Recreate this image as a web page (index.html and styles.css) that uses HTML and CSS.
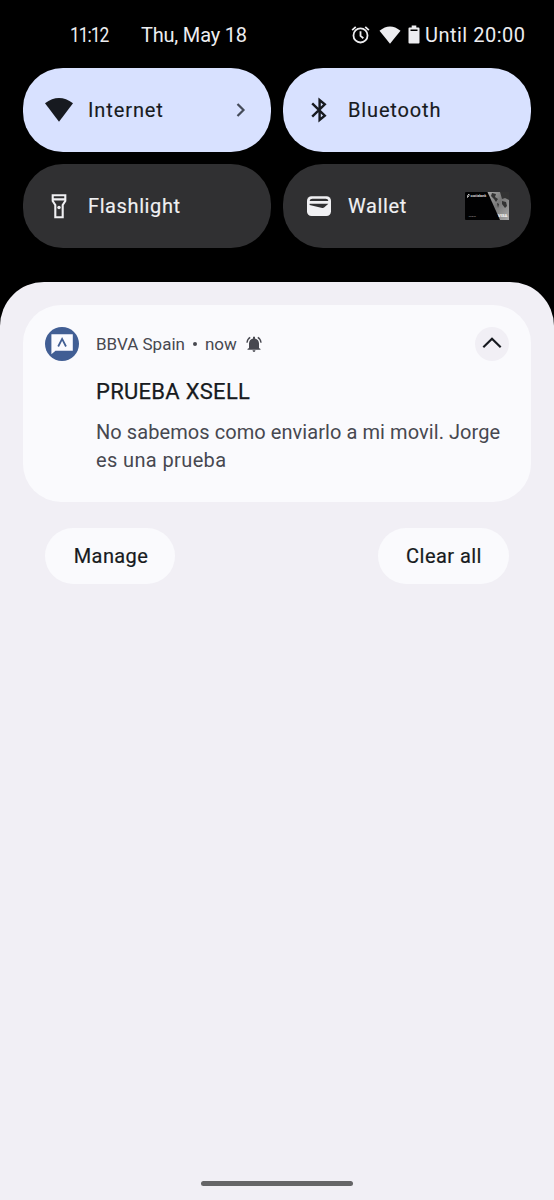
FILE: index.html
```html
<!DOCTYPE html>
<html lang="en">
<head>
<meta charset="utf-8">
<title>Notifications</title>
<link rel="stylesheet" href="styles.css">
</head>
<body>
<header class="status">
  <span class="time">11:12</span>
  <span class="date">Thu, May 18</span>
  <div class="system">
    <svg class="alarm" viewBox="0 0 20 20"><g fill="none" stroke="currentColor" stroke-width="1.9"><circle cx="10" cy="11" r="7.4"/><path d="M10 6.6v4.800l3 2.500M1.200 5.400 5 2M18.800 5.400 15 2"/></g></svg>
    <svg class="wifi-small" viewBox="0 0 22 18"><path fill="currentColor" d="M.5 4.800Q11-4 21.500 4.800L11 17.700Z"/></svg>
    <svg class="battery" viewBox="0 0 12 19"><path fill="currentColor" fill-rule="evenodd" d="M3.700.5h4.600v2H10.600q.9 0 .9.900V17.600q0 .9-.9.900H1.400q-.9 0-.9-.9V3.400q0-.9.9-.9H3.700ZM2.500 4.400v1.700h7V4.400Z"/></svg>
    <span class="until">Until 20:00</span>
  </div>
</header>
<section class="tiles">
  <div class="tile on">
    <svg class="tile-icon" viewBox="0 0 28 28"><path fill="currentColor" d="M0 7.200Q14-3.200 28 7.200L14 25.700Z"/></svg>
    <span class="internet">Internet</span>
    <svg class="chevron" viewBox="0 0 10 14"><path d="m1.500 1 6 6-6 6" fill="none" stroke="currentColor" stroke-width="2.200"/></svg>
  </div>
  <div class="tile on">
    <svg class="tile-icon" viewBox="0 0 28 28"><path d="m7.200 7.400 12.600 12.200-5.200 4.400V4l5.200 4.400L7.200 20.600" fill="none" stroke="currentColor" stroke-width="2.400"/></svg>
    <span class="bluetooth">Bluetooth</span>
  </div>
  <div class="tile">
    <svg class="tile-icon" viewBox="0 0 28 28"><g fill="none" stroke="currentColor" stroke-width="2.100"><path d="M7.700 3.300h12.600V9l-2.600 4v12.200h-7.400V13L7.700 9ZM7.700 7.400h12.600"/></g><circle cx="14" cy="15.500" r="1.700" fill="currentColor"/></svg>
    <span class="flashlight">Flashlight</span>
  </div>
  <div class="tile">
    <svg class="tile-icon" viewBox="0 0 28 28"><rect x="2" y="4.300" width="24" height="19.700" rx="4.500" fill="currentColor"/><path d="M4.600 9q.3-2.300 2.800-2.300h13.200q2.500 0 2.800 2.300ZM4.600 11.800h18.800l-4.300 3.700q-.8.700-1.900.4L4.600 12.900Z" fill="#303032"/></svg>
    <span class="wallet">Wallet</span>
    <svg class="bank-card" viewBox="0 0 44 28"><defs><linearGradient id="shine" x2="1" y2="1"><stop stop-color="#aaa"/><stop offset=".45" stop-color="#777"/><stop offset="1" stop-color="#aaa"/></linearGradient></defs><rect width="44" height="28" rx="1" fill="#010102"/><path d="M22.500 0H44v28H35Z" fill="url(#shine)"/><path d="m27 1 4 1-1 3 3 2-2 3-2-3-3-3ZM35 0h9v8l-4-2-3 1ZM37 9l4 1 1 4-2 2-3-4ZM32 11l2 1-1 4Z" fill="#333"/><path d="M2.500 3.500 4 2v2L2.500 5.500Z" stroke="#eee" stroke-width=".7" fill="none"/><text x="5.500" y="5" class="card-name">scotiabank</text><text x="3.500" y="24.500" class="card-holder">Jorge M.</text><text x="33" y="25.300" class="card-brand">VISA</text></svg>
  </div>
</section>
<main class="shade">
  <article class="notice">
    <svg class="app-icon" viewBox="0 0 34 34"><circle cx="17" cy="17" r="17" fill="#415e94"/><path d="M6.400 7.200h21.400v16.600H10.500L6.400 27.300Z" fill="#fafaff"/><path d="m13.200 19.500 3.900-7.600 3.900 7.600" fill="none" stroke="#415e94" stroke-width="1.800"/></svg>
    <div class="content">
      <div class="meta"><span class="app-name">BBVA Spain</span><span class="dot"></span><span class="now">now</span>
        <svg class="bell" viewBox="0 0 16 16"><path fill="currentColor" d="M3 12V7.500Q3.100 3.400 7 2.500V1q1-1 2 0v1.500q3.900.9 4 5V12l1.500 1v.7h-13V13ZM6.500 14.300h3Q9.300 16 8 16T6.500 14.300"/><path d="M4.200 1.400Q1.200 3.200 1 6.700M11.800 1.400Q14.800 3.200 15 6.700" fill="none" stroke="currentColor" stroke-width="1.300"/></svg>
      </div>
      <h1 class="title">PRUEBA XSELL</h1>
      <p class="message">No sabemos como enviarlo a mi movil. Jorge<br><span class="last-line">es una prueba</span></p>
    </div>
    <button class="collapse" aria-label="Collapse"><svg viewBox="0 0 34 34"><path d="m8.300 20.300 8.700-8.500 8.700 8.500" fill="none" stroke="currentColor" stroke-width="2.200"/></svg></button>
  </article>
  <div class="actions"><button class="action manage">Manage</button><button class="action clear">Clear all</button></div>
  <div class="home-bar"></div>
</main>
</body>
</html>
```
FILE: styles.css
```css
* { box-sizing: border-box; }
body { margin: 0; height: 1200px; display: flex; flex-direction: column; background: #000; font-family: Roboto, sans-serif; color: #171a20; overflow: hidden; }
svg { display: block; flex: none; }
button { border: 0; padding: 0; font: inherit; color: inherit; }
.status { height: 68px; padding: 1px 29px 0 70px; display: flex; align-items: center; color: #ededf0; font-size: 20px; white-space: nowrap; }
.time { width: 71px; letter-spacing: -1.2px; transform: scaleX(.87); transform-origin: left; }
.date { letter-spacing: -.2px; }
.system { margin-left: auto; display: flex; align-items: center; }
.alarm { width: 19px; height: 19px; margin-right: 9px; }
.wifi-small { width: 22px; height: 18px; margin-right: 7px; }
.battery { width: 12px; height: 19px; margin-right: 5px; }
.until { letter-spacing: .5px; margin-right: -.5px; }
.tiles { display: grid; grid-template-columns: 248px 248px; grid-auto-rows: 84px; gap: 12px; padding: 0 23px; }
.tile { display: flex; align-items: center; padding: 0 22px; border-radius: 40px; background: #303032; color: #f0f0f3; font-size: 20px; -webkit-text-stroke: .15px currentColor; white-space: nowrap; }
.on { background: #d8e1ff; color: #171a20; }
.tile-icon { width: 28px; height: 28px; margin-right: 15px; }
.internet { letter-spacing: .9px; }
.bluetooth { letter-spacing: .85px; }
.flashlight { letter-spacing: .6px; }
.wallet { letter-spacing: .6px; }
.chevron { width: 10px; height: 14px; margin: 0 3px 0 auto; color: #454b59; }
.bank-card { width: 44px; height: 28px; margin-left: auto; -webkit-text-stroke: 0; }
.card-name { font: 700 3.2px Roboto, sans-serif; fill: #ddd; }
.card-holder { font: 2px Roboto, sans-serif; fill: #aaa; }
.card-brand { font: 700 4.2px Roboto, sans-serif; fill: #fff; }
.shade { margin-top: 34px; flex: 1; display: flex; flex-direction: column; background: #f1eff5; border-radius: 44px 44px 0 0; padding: 23px 23px 0; }
.notice { height: 197px; display: flex; align-items: flex-start; padding: 22px 22px 0; background: #fafafd; border-radius: 38px; }
.app-icon { width: 34px; height: 34px; }
.content { flex: 1; margin-left: 17px; white-space: nowrap; }
.meta { height: 34px; display: flex; align-items: center; color: #474850; font-size: 17px; }
.dot { width: 4px; height: 4px; margin: 0 8px; border-radius: 50%; background: currentColor; }
.bell { width: 16px; height: 16px; margin-left: 9px; }
.title { margin: 16px 0 0; font-size: 22px; line-height: 30px; font-weight: 400; letter-spacing: .28px; -webkit-text-stroke: .25px currentColor; }
.message { margin: 11px 0 0; font-size: 20px; line-height: 28px; letter-spacing: .07px; color: #474850; }
.last-line { letter-spacing: .38px; }
.collapse { width: 34px; height: 34px; border-radius: 50%; background: #f1eff5; margin-left: -34px; }
.actions { display: flex; justify-content: space-between; padding: 26px 22px 0; }
.action { width: 131px; height: 56px; border-radius: 28px; background: #fafafd; font-size: 20px; -webkit-text-stroke: .2px currentColor; }
.manage { width: 130px; padding-left: 2px; letter-spacing: .4px; }
.clear { padding-left: 1px; letter-spacing: .45px; }
.home-bar { width: 152px; height: 5px; border-radius: 3px; background: #656567; margin: auto auto 14px; }
```
